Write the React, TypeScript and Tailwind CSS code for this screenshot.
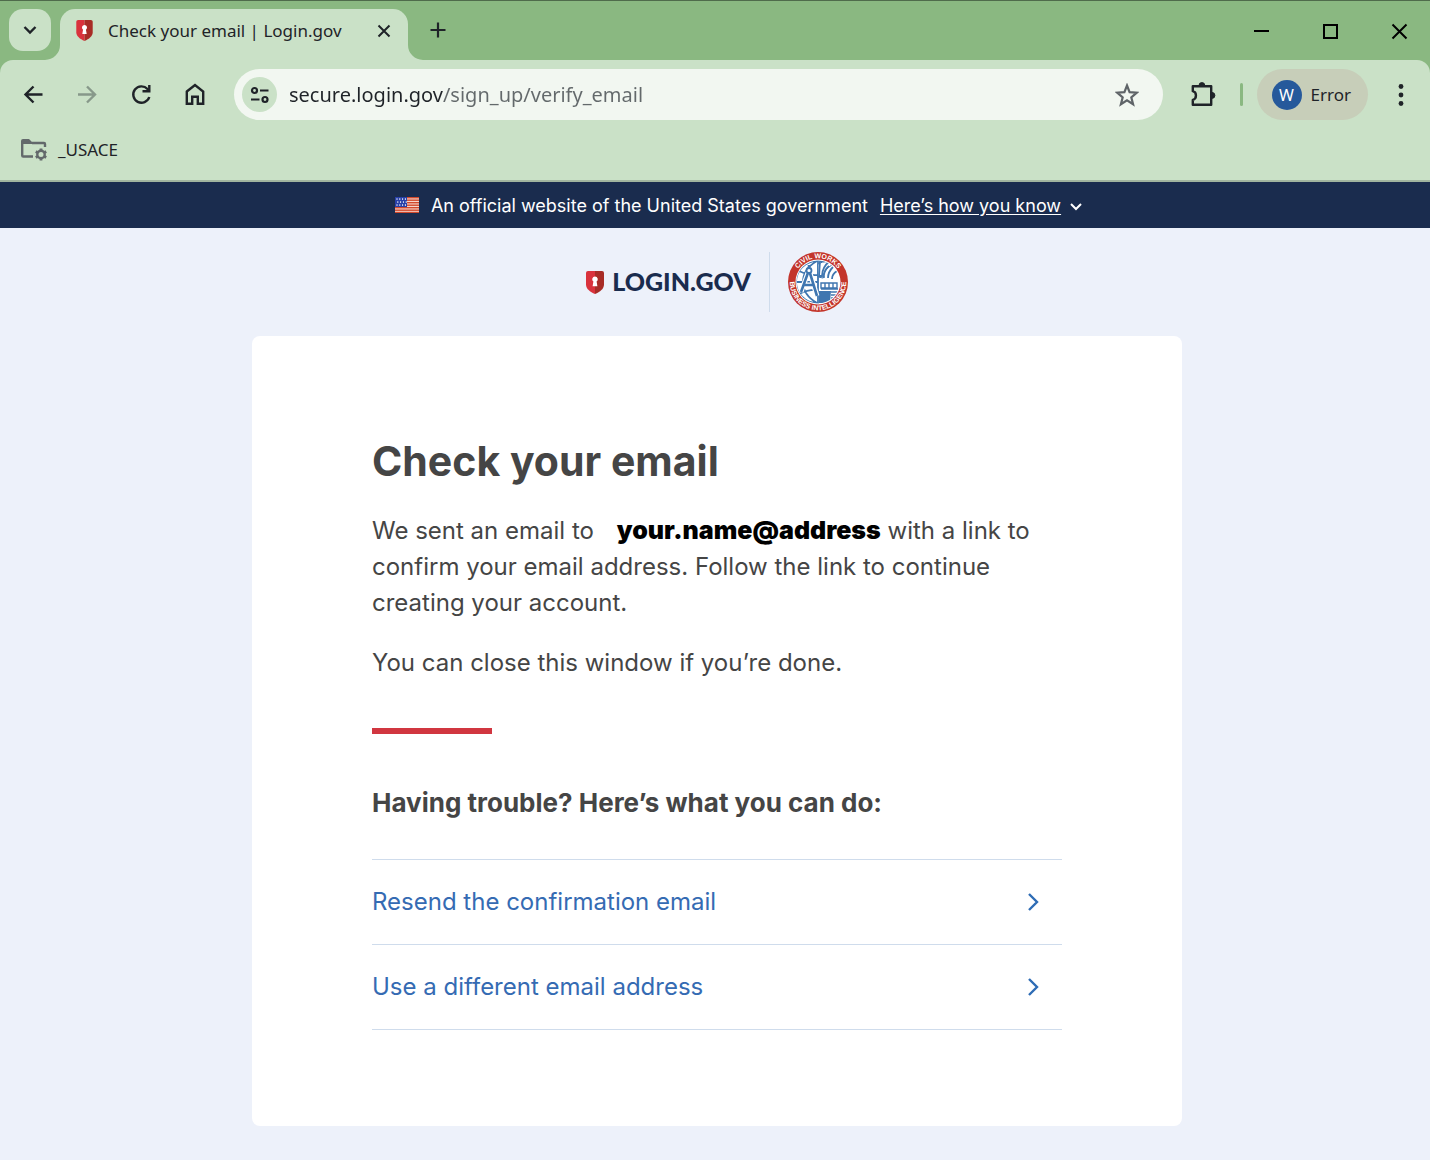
import React from "react";

const UI = "font-['Noto_Sans','Open_Sans',sans-serif]";

function Shield({ className }: { className: string }) {
  return (
    <svg viewBox="0 0 18 23" className={className} aria-hidden="true">
      <path d="M2 0h7v23C4 20.800 0 18 0 13.500V2a2 2 0 0 1 2-2z" fill="#d9323c" />
      <path d="M16 0H9v23c5-2.200 9-5 9-9.500V2a2 2 0 0 0-2-2z" fill="#a82c26" />
      <path d="M9 5.500a2.800 2.800 0 0 0-1.600 5.100L6.600 15.200h4.800l-.8-4.600A2.800 2.800 0 0 0 9 5.500z" fill="#fff" />
    </svg>
  );
}

function Flag() {
  return (
    <svg viewBox="0 0 24 16" className="h-4 w-6" aria-hidden="true">
      <rect width="24" height="16" fill="#f6d5cb" />
      {[0, 2.5, 5, 7.5, 10, 12.5, 14.800].map((y) => (
        <rect key={y} y={y} width="24" height="1.400" fill="#d1492c" />
      ))}
      <rect width="12" height="10" fill="#2740a8" />
      {[1.3, 4.3, 7.3].map((y) =>
        [1.5, 4.3, 7.1, 9.9].map((x) => <rect key={`${x}-${y}`} x={y === 4.3 ? x + 0.8 : x} y={y} width="1" height="1.500" fill="#fff" />),
      )}
    </svg>
  );
}

function Seal() {
  return (
    <svg viewBox="0 0 60 60" className="size-[60px]" role="img" aria-label="Civil Works Business Intelligence">
      <defs>
        <path id="seal-top" d="M6.200 30a23.800 23.800 0 0 1 47.600 0" />
        <path id="seal-bottom" d="M3.500 20.500a28.200 28.200 0 1 0 53 0" />
        <clipPath id="seal-disc">
          <circle cx="30" cy="30" r="21.500" />
        </clipPath>
      </defs>
      <circle cx="30" cy="30" r="30" fill="#c3352b" />
      <circle cx="30" cy="30" r="22.500" fill="#fff" />
      <g clipPath="url(#seal-disc)" fill="none" stroke="#3f76b0" strokeWidth="1.800">
        <path d="M29 9a21 21 0 0 0 0 42M29 9q-14 8-14 21t14 21M30 8v44M11 19q10 5 19 4M8.500 30H30M11 42q10-5 19-4" />
        <path d="M30 12q9-5 14 1-8 4-9 13l-5-1z" fill="#fff" strokeWidth="1" />
        <path d="M32 9h10q-8 6-8 15h-3zM41 14q-6 5-5 12M45 15q-5 5-5 11M49 19q-5 3-5 8" />
        <path d="M33 37h17M33 31h16v5H33zM37 31v5M41 31v5M45 31v5" strokeWidth="1.400" />
        <path d="M31 39h12l-1 12H31z" fill="#3f76b0" stroke="none" />
        <path d="M43 40h8M43 43h7M43 46h5" strokeWidth="1.400" />
        <path d="M21 18 13 40M21 18l8 26M14 33h14" stroke="#fff" strokeWidth="5" />
        <path d="M21 18 13 40M21 18l8 26M15 33h11M21 13v5" strokeWidth="2.600" />
        <circle cx="21" cy="18.500" r="2.500" fill="#fff" />
      </g>
      <g fill="#fff" className="font-['Liberation_Sans',sans-serif] text-[7px] font-bold">
        <text textAnchor="middle">
          <textPath href="#seal-top" startOffset="50%">CIVIL WORKS</textPath>
        </text>
        <text textAnchor="middle">
          <textPath href="#seal-bottom" startOffset="50%">BUSINESS INTELLIGENCE</textPath>
        </text>
      </g>
    </svg>
  );
}

function Flare({ flip = false }: { flip?: boolean }) {
  return (
    <svg
      viewBox="0 0 15 15"
      className={flip ? "absolute bottom-0 left-full size-[15px] -scale-x-100" : "absolute right-full bottom-0 size-[15px]"}
      aria-hidden="true"
    >
      <path d="M15 0v15H0A15 15 0 0 0 15 0z" fill="#cae1c7" />
    </svg>
  );
}

function TitleBar() {
  return (
    <div className="flex h-[60px] items-end border-t border-[#4f6b4b] pl-[9px]">
      <button aria-label="Search tabs" className="mb-[9px] flex size-[42px] items-center justify-center rounded-[14px] bg-[#cae1c7]">
        <svg viewBox="0 0 14 10" className="h-[10px] w-[14px]" fill="none" stroke="#1f2328" strokeWidth="2.400">
          <path d="m1.500 2 5.500 5.500L12.500 2" />
        </svg>
      </button>
      <div className="relative ml-[9px] flex h-[51px] w-[348px] items-center rounded-t-[15px] bg-[#cae1c7] px-4 pb-2">
        <Flare />
        <Flare flip />
        <Shield className="mr-[15px] h-[21px] w-[17px] shrink-0" />
        <span className="flex-1 text-[17px] whitespace-nowrap text-[#1f2328]">Check your email | Login.gov</span>
        <button aria-label="Close tab">
          <svg viewBox="0 0 16 16" className="size-4" fill="none" stroke="#1f2328" strokeWidth="2">
            <path d="m2.500 2.500 11 11m0-11-11 11" />
          </svg>
        </button>
      </div>
      <button aria-label="New tab" className="mb-[22px] ml-[22px]">
        <svg viewBox="0 0 16 16" className="size-4" fill="none" stroke="#1f2328" strokeWidth="2.200">
          <path d="M8 .5v15M.5 8h15" />
        </svg>
      </button>
      <div className="mr-[22px] mb-5 ml-auto flex gap-[52px]">
        <button aria-label="Minimize">
          <svg viewBox="0 0 17 17" className="size-[17px]" stroke="#000" strokeWidth="2">
            <path d="M1 8h15" />
          </svg>
        </button>
        <button aria-label="Maximize">
          <svg viewBox="0 0 17 17" className="size-[17px]" fill="none" stroke="#000" strokeWidth="2">
            <path d="M2 2h13v13H2z" />
          </svg>
        </button>
        <button aria-label="Close window">
          <svg viewBox="0 0 17 17" className="size-[17px]" stroke="#000" strokeWidth="2">
            <path d="m1.500 1.500 14 14m0-14-14 14" />
          </svg>
        </button>
      </div>
    </div>
  );
}

function Toolbar() {
  return (
    <div className="flex h-[69px] items-center pr-[21px] pl-[22px]">
      <div className="mr-[27px] flex gap-[31px]">
        <button aria-label="Back">
          <svg viewBox="0 0 23 23" className="size-[23px]" fill="none" stroke="#1f2328" strokeWidth="2.400">
            <path d="M20.500 11.500H4M11.500 3.500l-8 8 8 8" />
          </svg>
        </button>
        <button aria-label="Forward">
          <svg viewBox="0 0 23 23" className="size-[23px]" fill="none" stroke="#87988a" strokeWidth="2.400">
            <path d="M2 11.500h17M11 3.500l8 8-8 8" />
          </svg>
        </button>
        <button aria-label="Reload">
          <svg viewBox="0 0 23 23" className="size-[23px]" fill="none" stroke="#1f2328" strokeWidth="2.400">
            <path d="M19.300 14A8.200 8.200 0 1 1 17.500 6l1.800 2.200" />
            <path d="M19.300 2v6.200h-6.800" />
          </svg>
        </button>
        <button aria-label="Home">
          <svg viewBox="0 0 23 23" className="size-[23px]" fill="none" stroke="#1f2328" strokeWidth="2.400">
            <path d="M2.800 8.500 11 2l8.200 6.500v12.300h-5.400v-7H8.200v7H2.800z" />
          </svg>
        </button>
      </div>
      <div className="flex h-[51px] flex-1 items-center rounded-full bg-[#f2f7f1] pr-6 pl-2">
        <button aria-label="View site information" className="flex size-[35px] shrink-0 items-center justify-center rounded-full bg-[#cae1c7]">
          <svg viewBox="0 0 20 18" className="h-[18px] w-5" fill="none" stroke="#1f2328" strokeWidth="2.200">
            <circle cx="4.500" cy="4.500" r="2.500" />
            <circle cx="15" cy="13.500" r="2.500" />
            <path d="M10 4.500h8.500M1 13.500h8.500" />
          </svg>
        </button>
        <input
          aria-label="Address"
          type="text"
          defaultValue="secure.login.gov/sign_up/verify_email"
          className="ml-3 h-9 min-w-0 flex-1 bg-[linear-gradient(90deg,#1f2328_154px,#63696b_154px)] bg-clip-text text-[20px] text-transparent caret-[#1f2328] outline-none"
        />
        <button aria-label="Bookmark this tab">
          <svg viewBox="0 0 24 24" className="size-6" fill="none" stroke="#5f6468" strokeWidth="2.200">
            <path d="m12 2.500 2.600 6.700 7.200.5-5.500 4.600 1.800 7L12 17.400l-6.100 3.900 1.800-7-5.500-4.600 7.200-.5z" />
          </svg>
        </button>
      </div>
      <button aria-label="Extensions" className="ml-[27px]">
        <svg viewBox="0 0 26 26" className="size-[26px]" fill="none" stroke="#1f2328" strokeWidth="2.400" strokeLinejoin="round">
          <path d="M2.800 4.200h18.400v18.600H2.800v-5c4.200-1 4.200-7.600 0-8.600z" />
          <path d="M9 3.500a2.900 2.900 0 0 1 5.800 0zM22 10.500a2.900 2.900 0 0 1 0 5.800z" fill="#1f2328" strokeWidth="1" />
        </svg>
      </button>
      <span className="ml-6 h-[23px] w-[3px] rounded-full bg-[#8ab881]" />
      <button className="ml-[14px] flex h-[51px] items-center gap-[9px] rounded-full bg-[#c7ceb9] pr-[17px] pl-[15px] text-[17px] text-[#1f2328]">
        <span className="flex size-[30px] items-center justify-center rounded-full bg-[#26599b] text-base text-white">W</span>
        Error
      </button>
      <button aria-label="Menu" className="ml-[25px]">
        <svg viewBox="0 0 16 22" className="h-[22px] w-4" fill="#1f2328">
          <circle cx="8" cy="2.500" r="2.400" />
          <circle cx="8" cy="11" r="2.400" />
          <circle cx="8" cy="19.500" r="2.400" />
        </svg>
      </button>
    </div>
  );
}

function BookmarksBar() {
  return (
    <div className="flex h-[53px] items-center border-b-2 border-[#a1b59f] pb-[10px] pl-5">
      <button className="flex items-center gap-[10px] text-[17px] text-[#1f2328]">
        <svg viewBox="0 0 28 23" className="h-[23px] w-7" fill="none" stroke="#63696b" strokeWidth="2.400" aria-hidden="true">
          <path d="M13 18.500H3.200a1 1 0 0 1-1-1V3.500M25 9V6a1 1 0 0 0-1-1H12" />
          <path d="M1 6V3a2 2 0 0 1 2-2h6l3 3v2z" fill="#63696b" stroke="none" />
          <circle cx="21" cy="16.500" r="3.700" />
          <path d="M21 10.500v2M21 20.500v2M15.800 13.500l1.700 1M24.500 18.500l1.700 1M15.800 19.500l1.700-1M24.500 14.500l1.700-1" strokeWidth="2.800" />
        </svg>
        _USACE
      </button>
    </div>
  );
}

function Banner() {
  return (
    <div className="flex h-[46px] items-center justify-center bg-[#1a2c4e] pl-12 text-[18px] text-white">
      <Flag />
      <span className="ml-3">An official website of the United States government</span>
      <button className="ml-3 flex items-center gap-2">
        <span className="underline underline-offset-2">Here’s how you know</span>
        <svg viewBox="0 0 14 10" className="mt-1 h-[10px] w-[14px]" fill="none" stroke="#fff" strokeWidth="2" aria-hidden="true">
          <path d="m2 2 5 5 5-5" />
        </svg>
      </button>
    </div>
  );
}

const actions = ["Resend the confirmation email", "Use a different email address"];

export default function App() {
  return (
    <div className="min-h-screen bg-[#edf1fa] font-['Inter',sans-serif]">
      <div className={`${UI} bg-[#8ab881]`}>
        <TitleBar />
        <div className="rounded-t-[13px] bg-[#cae1c7]">
          <Toolbar />
          <BookmarksBar />
        </div>
      </div>
      <Banner />
      <div className="pl-1">
        <header className="flex h-[108px] items-center justify-center">
          <a href="#" className="flex items-center gap-2 pr-[18px] font-['Lato',sans-serif] text-[25px] font-black text-[#1a2c4e]">
            <Shield className="h-[23px] w-[18px]" />
            LOGIN.GOV
          </a>
          <div className="border-l border-[#cfdcec] pl-[18px]">
            <Seal />
          </div>
        </header>
        <main className="mx-auto max-w-[930px] rounded-lg bg-white px-[120px] pt-[100px] pb-24 text-[24px] leading-9 text-[#454545]">
          <h1 className="text-[41px] leading-[50px] font-bold">Check your email</h1>
          <p className="mt-[27px]">
            We sent an email to <strong className="ml-4 text-[25px] leading-none font-black text-black">your.name@address</strong> with a
            link to confirm your email address. Follow the link to continue creating your account.
          </p>
          <p className="mt-6">You can close this window if you’re done.</p>
          <hr className="mt-[47px] w-[120px] border-t-[6px] border-[#d13640]" />
          <h2 className="mt-[51px] text-[26px] font-bold">Having trouble? Here’s what you can do:</h2>
          <ul className="mt-[38px] border-t border-[#cfdcec]">
            {actions.map((label) => (
              <li key={label} className="border-b border-[#cfdcec]">
                <a href="#" className="flex h-[84px] items-center justify-between pr-[22px] text-[#356bb3]">
                  {label}
                  <svg viewBox="0 0 14 20" className="h-5 w-[14px]" fill="none" stroke="#2e6cb5" strokeWidth="2.400" aria-hidden="true">
                    <path d="m3 2 8 8-8 8" />
                  </svg>
                </a>
              </li>
            ))}
          </ul>
        </main>
      </div>
    </div>
  );
}
